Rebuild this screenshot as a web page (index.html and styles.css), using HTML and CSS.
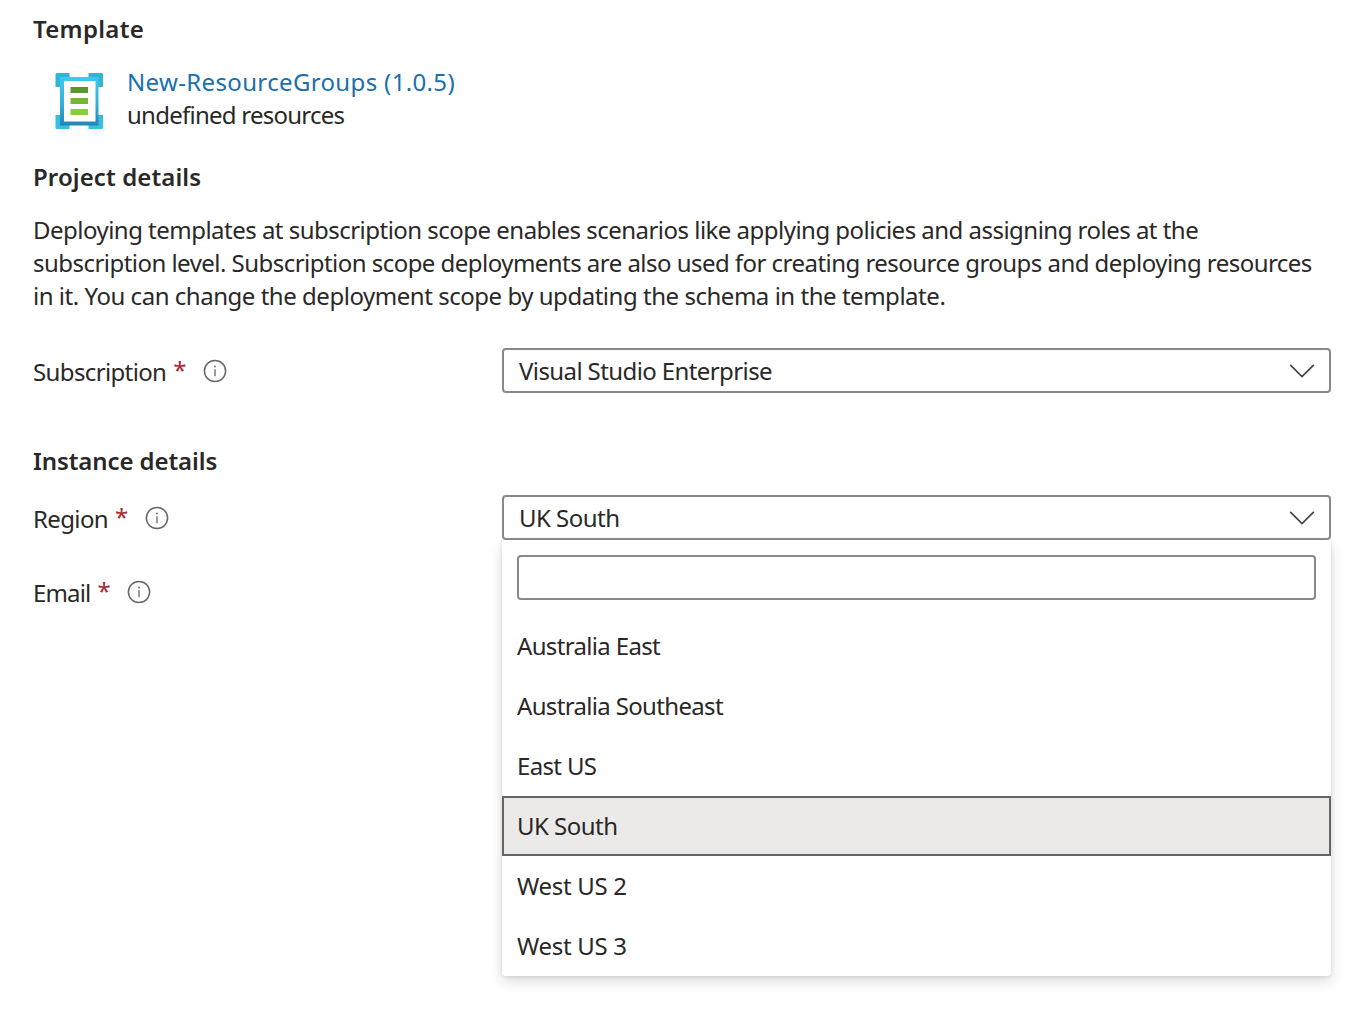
FILE: index.html
```html
<!DOCTYPE html>
<html lang="en">
<head>
<meta charset="utf-8">
<title>Custom deployment</title>
<link rel="stylesheet" href="styles.css">
</head>
<body>
<svg class="defs" aria-hidden="true">
  <symbol id="info" viewBox="0 0 24 24">
    <circle cx="12" cy="12" r="10.6" fill="none" stroke="#666" stroke-width="1.5"/>
    <path d="M12 10.2V17.2" stroke="#666" stroke-width="1.3"/>
    <circle cx="12" cy="7.5" r="0.9" fill="#666"/>
  </symbol>
  <symbol id="chevron" viewBox="0 0 26 16">
    <path d="M1.2 1.8L13 13.6L24.8 1.8" fill="none" stroke="#444" stroke-width="1.7"/>
  </symbol>
</svg>
<main class="page">
  <h2 class="heading w-template">Template</h2>
  <section class="template">
    <svg class="template-icon" viewBox="0 0 48 58">
      <defs>
        <linearGradient id="frame" x1="0" y1="0" x2="0" y2="1">
          <stop offset="0" stop-color="#3ccbe9"/>
          <stop offset="0.5" stop-color="#35b5dc"/>
          <stop offset="1" stop-color="#2187b5"/>
        </linearGradient>
        <linearGradient id="corner" x1="0" y1="0" x2="0" y2="1">
          <stop offset="0" stop-color="#2fb4d9"/>
          <stop offset="1" stop-color="#3cbfe0"/>
        </linearGradient>
      </defs>
      <path fill="url(#corner)" d="M2 1H14.500V15H0.500V2.500Q0.500 1 2 1ZM33.500 1H46.500Q48 1 48 2.500V15H33.500ZM0.500 43H14.500V57H2Q0.500 57 0.500 55.500ZM33.500 43H48V55.500Q48 57 46.500 57H33.500Z"/>
      <path fill="url(#frame)" d="M5 5H43.500V53.500H5Z"/>
      <path fill="#fff" d="M9 9H40.500V49.500H9Z"/>
      <path fill="#5b962b" d="M15.500 15H33V21H15.500Z"/>
      <path fill="#76b637" d="M15.500 26H33V32H15.500Z"/>
      <path fill="#85d03c" d="M15.500 37H33V43H15.500Z"/>
    </svg>
    <div class="template-text">
      <a class="link">New-ResourceGroups (1.0.5)</a>
      <span class="w-undefined">undefined resources</span>
    </div>
  </section>
  <h2 class="heading w-project">Project details</h2>
  <p class="description"><span class="line-a">Deploying templates at subscription scope enables scenarios like applying policies and assigning roles at the</span><br><span class="line-b">subscription level. Subscription scope deployments are also used for creating resource groups and deploying resources</span><br><span class="line-c">in it. You can change the deployment scope by updating the schema in the template.</span></p>
  <div class="field">
    <div class="label"><span class="w-sub">Subscription</span><span class="required">*</span><svg class="info"><use href="#info"/></svg></div>
    <div class="select"><span class="w-vse">Visual Studio Enterprise</span><svg class="chevron"><use href="#chevron"/></svg></div>
  </div>
  <h2 class="heading instance">Instance details</h2>
  <div class="field region">
    <div class="label"><span class="w-sub">Region</span><span class="required">*</span><svg class="info"><use href="#info"/></svg></div>
    <div class="select"><span class="w-uk">UK South</span><svg class="chevron"><use href="#chevron"/></svg>
      <div class="dropdown">
        <input class="search" type="text" aria-label="Filter regions">
        <ul class="options">
          <li class="option">Australia East</li>
          <li class="option">Australia Southeast</li>
          <li class="option">East US</li>
          <li class="option selected"><span class="w-uk">UK South</span></li>
          <li class="option"><span class="w-wus">West US 2</span></li>
          <li class="option"><span class="w-wus">West US 3</span></li>
        </ul>
      </div>
    </div>
  </div>
  <div class="field email">
    <div class="label"><span class="w-email">Email</span><span class="required">*</span><svg class="info"><use href="#info"/></svg></div>
  </div>
</main>
</body>
</html>
```
FILE: styles.css
```css
* { box-sizing: border-box; }
body {
  margin: 0;
  background: #fff;
  color: #292827;
  font: 24px/33px "Noto Sans", "Open Sans", sans-serif;
  letter-spacing: -0.3px;
  white-space: nowrap;
}
.defs { display: none; }
.page { padding: 12px 38px 0 33px; height: 1022px; overflow: hidden; }
.heading { margin: 0; font-size: 24px; font-weight: 600; line-height: 33px; }
.w-template { letter-spacing: 0.3px; }
.w-project { letter-spacing: 0.1px; }
.w-undefined { letter-spacing: -0.75px; }
.line-a { letter-spacing: -0.52px; }
.line-b { letter-spacing: -0.535px; }
.line-c { letter-spacing: -0.47px; }
.w-sub { letter-spacing: -0.63px; }
.w-vse { letter-spacing: -0.6px; }
.w-uk { letter-spacing: -0.52px; }
.w-wus { letter-spacing: -0.3px; }
.w-email { letter-spacing: -0.85px; }
.template { display: flex; padding-left: 22px; margin: 20px 0 29px; }
.template-icon { width: 48px; height: 58px; margin: 7px 24px 0 0; }
.template-text { display: flex; flex-direction: column; }
.link { color: #1a6fae; letter-spacing: 0.35px; }
.description { margin: 20px 0 36px; }
.field { display: grid; grid-template-columns: 469px 829px; height: 45px; }
.label { display: flex; align-items: center; padding-top: 2px; }
.required { color: #a92832; margin: -4px 0 0 7px; width: 12px; }
.info { width: 24px; height: 24px; margin: -1px 0 0 18px; }
.select {
  position: relative;
  display: flex;
  align-items: center;
  justify-content: space-between;
  padding: 0 14px 0 15px;
  border: 2px solid #8a8988;
  border-radius: 4px;
}
.chevron { width: 26px; height: 16px; }
.instance { margin: 51px 0 18px; letter-spacing: -0.1px; }
.email { margin-top: 29px; }
.dropdown {
  position: absolute;
  top: 43px;
  left: -2px;
  width: 829px;
  height: 436px;
  padding-top: 15px;
  background: #fff;
  border-radius: 0 0 4px 4px;
  box-shadow: 0 6px 14px rgba(0, 0, 0, 0.13), 0 1px 4px rgba(0, 0, 0, 0.11);
  clip-path: inset(0 -30px -30px -30px);
}
.search {
  display: block;
  width: 799px;
  height: 45px;
  margin: 0 15px 16px;
  border: 2px solid #8a8988;
  border-radius: 4px;
  background: #fff;
}
.options { list-style: none; margin: 0; padding: 0; letter-spacing: -0.66px; }
.option { height: 60px; padding: 0 15px; line-height: 59px; }
.selected {
  padding: 0 13px;
  line-height: 55px;
  background: #ebeae9;
  border: 2px solid #666;
}
```
